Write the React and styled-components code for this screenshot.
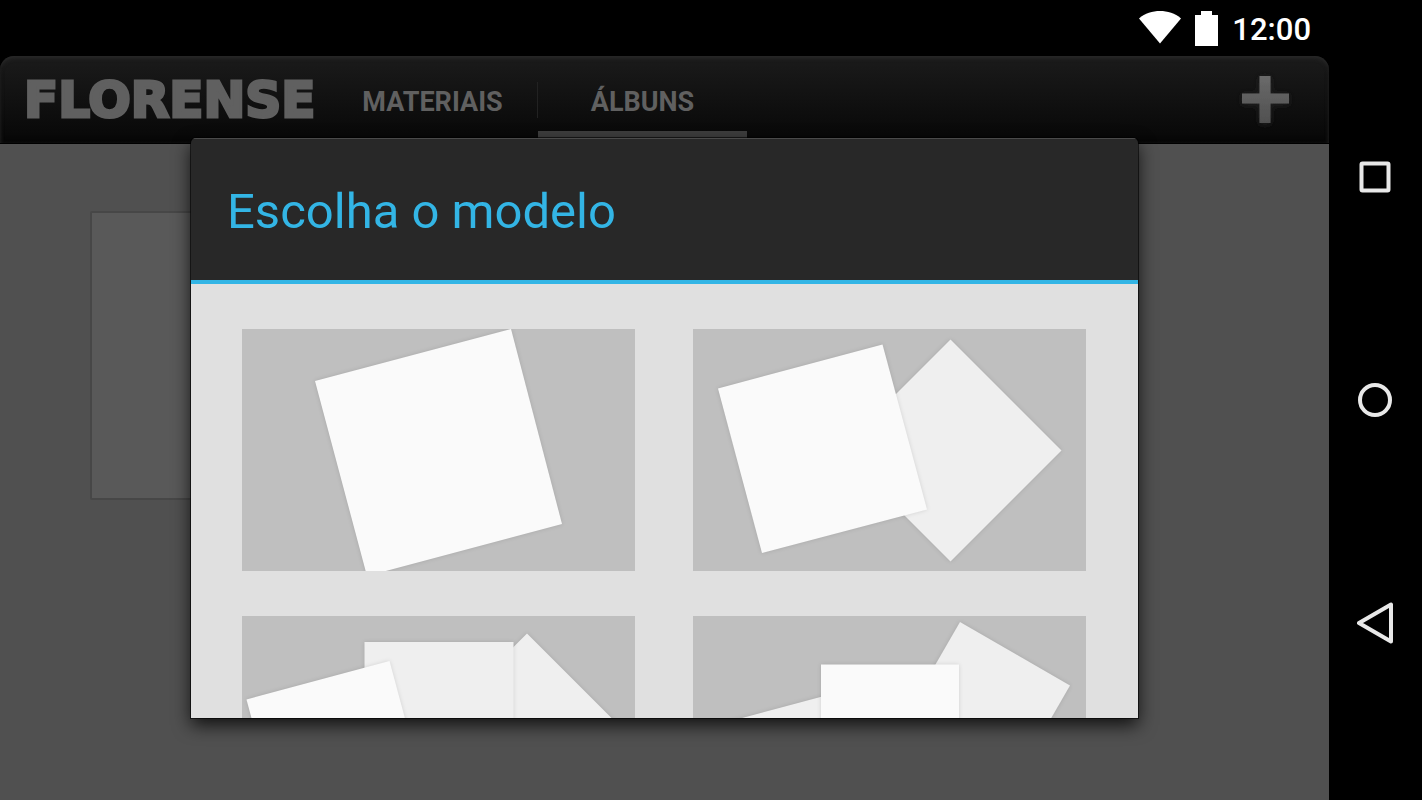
import React, { useState } from "react";
import styled, { createGlobalStyle } from "styled-components";

const GlobalStyle = createGlobalStyle`
  * {
    box-sizing: border-box;
  }

  body {
    margin: 0;
    background-color: #000;
    font-family: Roboto, "Liberation Sans", sans-serif;
  }

  button {
    padding: 0;
    border: 0;
    background: none;
    font-family: inherit;
    cursor: pointer;
  }

  svg {
    display: block;
  }
`;

const Device = styled.div`
  display: flex;
  height: 100vh;
  overflow: hidden;
`;

const Screen = styled.div`
  flex: 1;
  min-width: 0;
  display: flex;
  flex-direction: column;
`;

const StatusBar = styled.div`
  flex: none;
  height: 56px;
  padding: 0 18px 0 0;
  display: flex;
  align-items: center;
  justify-content: flex-end;
  gap: 14px;
`;

const Clock = styled.time`
  padding-top: 4px;
  color: #fff;
  font-size: 31px;
  font-weight: 500;
  line-height: 36px;
`;

const Window = styled.div`
  position: relative;
  flex: 1;
  min-height: 0;
  display: flex;
  flex-direction: column;
`;

const Header = styled.header`
  flex: none;
  height: 88px;
  padding: 0 40px 0 24px;
  display: flex;
  align-items: center;
  border-radius: 14px 14px 0 0;
  border-bottom: 1px solid #000;
  background: linear-gradient(#1b1b1b, #070707);
  box-shadow: inset 0 2px 4px #2b2b2b, inset 0 -3px 4px #070707;
`;

const Logo = styled.h1`
  flex: 0 0 304px;
  margin: 0;
  color: #606060;
  font-family: "DejaVu Sans", sans-serif;
  font-size: 50px;
  font-weight: 700;
  line-height: 88px;
  -webkit-text-stroke: 3px #606060;
`;

const Tabs = styled.nav`
  flex: 1;
  align-self: stretch;
  display: flex;
`;

const Tab = styled.button`
  width: 209px;
  padding: 16px 0 0;
  color: #606060;
  font-size: 27px;
  font-weight: 700;
  line-height: 32px;
  border-bottom: 12px solid ${({ $active }) => ($active ? "#3e3e3e" : "transparent")};
`;

const Divider = styled.div`
  align-self: center;
  width: 1px;
  height: 36px;
  background-color: #222;
`;

const Content = styled.main`
  flex: 1;
  padding: 67px 90px;
  background-color: #505050;
`;

const Album = styled.div`
  width: 289px;
  height: 289px;
  border: 2px solid #474747;
  border-radius: 2px;
  background-color: #595959;
`;

const Overlay = styled.div`
  position: absolute;
  inset: 0;
  padding: 82px 191px;
  display: flex;
`;

const Dialog = styled.section`
  flex: 1;
  min-width: 0;
  display: flex;
  flex-direction: column;
  overflow: hidden;
  border-radius: 5px 5px 0 0;
  box-shadow: 0 0 0 1px rgba(0, 0, 0, 0.6), 0 7px 18px rgba(0, 0, 0, 0.8);
`;

const DialogTitle = styled.h2`
  flex: none;
  margin: 0;
  padding: 4px 36px 0;
  color: #33b5e5;
  background-color: #282828;
  border-top: 1px solid #4a4a4a;
  border-bottom: 4px solid #33b5e5;
  font-size: 49px;
  font-weight: 400;
  line-height: 137px;
`;

const Models = styled.div`
  flex: 1;
  min-height: 0;
  overflow: hidden;
  padding: 45px 52px 45px 51px;
  display: grid;
  grid-template-columns: 1fr 1fr;
  align-content: start;
  gap: 45px 58px;
  background-color: #e0e0e0;
`;

const Model = styled.button`
  background-color: #bfbfbf;

  & > svg {
    width: 100%;
  }
`;

const Sheet = styled.polygon`
  fill: ${({ $front }) => ($front ? "#fafafa" : "#efefef")};
  filter: drop-shadow(0 0 2px rgba(0, 0, 0, 0.12));
`;

const NavBar = styled.nav`
  flex: none;
  width: 93px;
  padding: 66px 2px 66px 0;
  display: grid;
  grid-template-rows: repeat(3, 1fr);
`;

const NavButton = styled.button`
  display: flex;
  align-items: center;
  justify-content: center;

  & > svg {
    fill: none;
    stroke: #e8e8e8;
    stroke-width: 4;
    stroke-linejoin: round;
  }
`;

const tabs = ["MATERIAIS", "ÁLBUNS"];

// sheets are listed from back to front
const models = [
  {
    name: "Uma foto",
    sheets: ["269,0 73,52 125,247 320,195"]
  },
  {
    name: "Duas fotos",
    sheets: ["257.5,10.5 368.5,121.5 257.5,232.5 146.5,121.5", "25,59.5 189.5,15.5 234,180.5 69,224"]
  },
  {
    name: "Três fotos",
    sheets: [
      "285,17.5 390,122.5 285,227.5 180,122.5",
      "122.5,26 271.5,26 271.5,175 122.5,175",
      "4.5,83.5 147.5,45 186,188 43,226.5"
    ]
  },
  {
    name: "Três fotos com destaque",
    sheets: [
      "23,109 148,75.5 181.5,200.5 56.5,234",
      "267,6 377,69.5 313.5,179.5 203.5,116",
      "128,48.5 266,48.5 266,186.5 128,186.5"
    ]
  }
];

export default function App() {
  const [active, setActive] = useState("ÁLBUNS");

  return (
    <>
      <GlobalStyle />
      <Device>
        <Screen>
          <StatusBar>
            <svg width="42" height="34" viewBox="0 0 42 34" fill="#fff">
              <path d="M21 32.500 0 7.500C6 2 13.500 0 21 0S36 2 42 7.500Z" />
            </svg>
            <svg width="23" height="35" viewBox="0 0 23 35" fill="#fff">
              <path d="M6 0h11v4h6v31H0V4h6Z" />
            </svg>
            <Clock>12:00</Clock>
          </StatusBar>
          <Window>
            <Header>
              <Logo>FLORENSE</Logo>
              <Tabs>
                {tabs.map((tab, i) => (
                  <React.Fragment key={tab}>
                    {i > 0 && <Divider />}
                    <Tab $active={tab === active} onClick={() => setActive(tab)}>
                      {tab}
                    </Tab>
                  </React.Fragment>
                ))}
              </Tabs>
              <button aria-label="Novo álbum">
                <svg width="48" height="48" viewBox="0 0 48 48" overflow="visible">
                  <defs>
                    <linearGradient id="plus" x1="0" y1="0" x2="0" y2="1">
                      <stop offset="0" stopColor="#6a6a6a" />
                      <stop offset="1" stopColor="#505050" />
                    </linearGradient>
                    <filter id="glow" x="-30%" y="-30%" width="160%" height="160%">
                      <feDropShadow dx="0" dy="1" stdDeviation="3" floodColor="#222" />
                    </filter>
                  </defs>
                  <path
                    d="M18.500 0h11v17.500H48v10H29.500V47h-11V27.500H1v-10h17.500Z"
                    fill="url(#plus)"
                    filter="url(#glow)"
                  />
                </svg>
              </button>
            </Header>
            <Content>
              <Album />
            </Content>
            <Overlay>
              <Dialog role="dialog" aria-labelledby="dialog-title">
                <DialogTitle id="dialog-title">Escolha o modelo</DialogTitle>
                <Models>
                  {models.map(({ name, sheets }) => (
                    <Model key={name} aria-label={name}>
                      <svg viewBox="0 0 393 242">
                        {sheets.map((points, i) => (
                          <Sheet key={points} points={points} $front={i === sheets.length - 1} />
                        ))}
                      </svg>
                    </Model>
                  ))}
                </Models>
              </Dialog>
            </Overlay>
          </Window>
        </Screen>
        <NavBar>
          <NavButton aria-label="Recentes">
            <svg width="32" height="32" viewBox="0 0 32 32">
              <rect x="2.500" y="2.500" width="27" height="27" rx="1" />
            </svg>
          </NavButton>
          <NavButton aria-label="Início">
            <svg width="34" height="34" viewBox="0 0 34 34">
              <circle cx="17" cy="17" r="15" />
            </svg>
          </NavButton>
          <NavButton aria-label="Voltar">
            <svg width="36" height="42" viewBox="0 0 36 42">
              <path d="M34 2.500v37L2 21Z" />
            </svg>
          </NavButton>
        </NavBar>
      </Device>
    </>
  );
}
